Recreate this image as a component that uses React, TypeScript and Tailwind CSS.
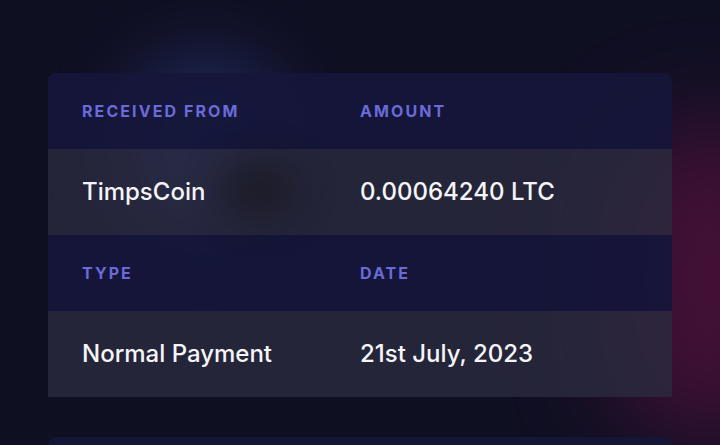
const rows = [
  { labels: ['Received From', 'Amount'], values: ['TimpsCoin', '0.00064240 LTC'] },
  { labels: ['Type', 'Date'], values: ['Normal Payment', '21st July, 2023'] },
]

export default function App() {
  return (
    <div
      className="relative w-[720px] h-[445px] overflow-hidden bg-[#0f0f22]"
      style={{ fontFamily: 'Inter, "Noto Sans", sans-serif' }}
    >
      {/* background glows */}
      <div className="absolute left-[130px] top-[60px] w-[150px] h-[170px] rounded-full bg-[#34489a] opacity-55 blur-[40px]" />
      <div className="absolute left-[610px] top-[120px] w-[200px] h-[320px] rounded-full bg-[#55113c] opacity-75 blur-[50px]" />

      <div className="relative pt-[73px] px-[48px]">
        <div className="rounded-t-lg overflow-hidden">
          {rows.map((r, i) => (
            <div key={i}>
              <div className="grid grid-cols-2 h-[76px] px-[34px] items-center bg-[#15163a]/95">
                {r.labels.map(l => (
                  <p key={l} className="text-[16px] font-bold uppercase tracking-[0.13em] text-[#6a6ad9]">{l}</p>
                ))}
              </div>
              <div className="relative grid grid-cols-2 h-[86px] px-[34px] items-center bg-[#2a2a40]/80">
                {i === 0 && (
                  <div className="absolute left-[170px] top-[10px] w-[80px] h-[60px] rounded-full bg-[#18181f] opacity-70 blur-[18px]" />
                )}
                {r.values.map(v => (
                  <p key={v} className="relative text-[24px] font-medium text-[#f5f5f8]">{v}</p>
                ))}
              </div>
            </div>
          ))}
        </div>
        <div className="mt-[40px] h-[20px] rounded-t-lg bg-[#15163a]/90" />
      </div>
    </div>
  )
}
